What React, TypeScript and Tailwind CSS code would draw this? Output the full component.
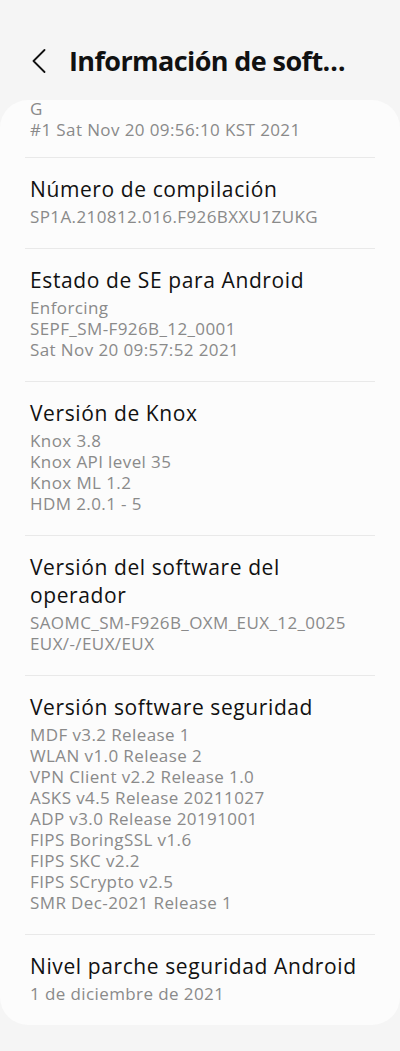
import React from "react";

const items = [
  { title: "Número de compilación", lines: ["SP1A.210812.016.F926BXXU1ZUKG"] },
  {
    title: "Estado de SE para Android",
    lines: ["Enforcing", "SEPF_SM-F926B_12_0001", "Sat Nov 20 09:57:52 2021"],
  },
  {
    title: "Versión de Knox",
    lines: ["Knox 3.8", "Knox API level 35", "Knox ML 1.2", "HDM 2.0.1 - 5"],
  },
  {
    title: "Versión del software del operador",
    lines: ["SAOMC_SM-F926B_OXM_EUX_12_0025", "EUX/-/EUX/EUX"],
  },
  {
    title: "Versión software seguridad",
    lines: [
      "MDF v3.2 Release 1",
      "WLAN v1.0 Release 2",
      "VPN Client v2.2 Release 1.0",
      "ASKS v4.5 Release 20211027",
      "ADP v3.0 Release 20191001",
      "FIPS BoringSSL v1.6",
      "FIPS SKC v2.2",
      "FIPS SCrypto v2.5",
      "SMR Dec-2021 Release 1",
    ],
  },
  { title: "Nivel parche seguridad Android", lines: ["1 de diciembre de 2021"] },
];

function Divider() {
  return <div className="mx-[25px] h-px bg-[#e9e9e9]" />;
}

export default function App() {
  return (
    <div
      className="min-h-[1051px] w-[400px] bg-[#f5f5f5]"
      style={{ fontFamily: "'Open Sans', Roboto, sans-serif" }}
    >
      {/* Header */}
      <div className="flex h-[100px] items-center pt-[22px]">
        <button className="ml-[31px] flex h-[26px] w-[16px] items-center justify-center">
          <svg width="14" height="24" viewBox="0 0 14 24" fill="none">
            <path d="M12.5 1 L1.5 12 L12.5 23" stroke="#111" strokeWidth="1.8" strokeLinecap="round" strokeLinejoin="round" />
          </svg>
        </button>
        <h1 className="ml-[22px] w-[296px] truncate text-[27px] font-bold leading-[34px] tracking-[-0.6px] text-[#111]">
          Información de software
        </h1>
      </div>

      {/* Card */}
      <div className="overflow-hidden rounded-[28px] bg-[#fcfcfc]">
        <div className="-mt-[2px] px-[30px] pb-[17px] text-[17px] leading-[21px] tracking-[0.4px] text-[#8a8a8a]">
          <div>G</div>
          <div>#1 Sat Nov 20 09:56:10 KST 2021</div>
        </div>
        {items.map((item) => (
          <div key={item.title}>
            <Divider />
            <div className="px-[30px] pb-[21px] pt-[17px]">
              <div className="mb-[3px] text-[21px] leading-[28px] tracking-[0.6px] text-[#111]">{item.title}</div>
              {item.lines.map((l) => (
                <div key={l} className="text-[17px] leading-[21px] tracking-[0.4px] text-[#8a8a8a]">
                  {l}
                </div>
              ))}
            </div>
          </div>
        ))}
      </div>
    </div>
  );
}
